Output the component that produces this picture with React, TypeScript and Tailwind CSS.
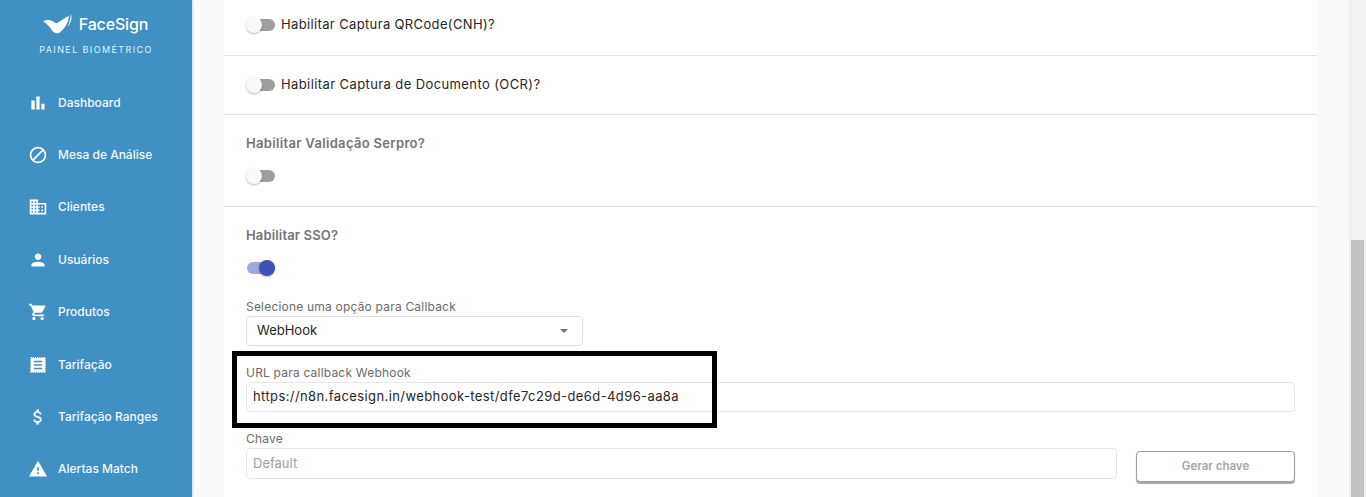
import { ReactNode } from "react";
import { MdBarChart, MdBlock, MdBusiness, MdPerson, MdShoppingCart, MdAttachMoney, MdWarning } from "react-icons/md";

// receipt glyph with the jagged edge all round, md-icons only has top/bottom teeth
function TarifaIcon({ className }: { size?: number; className?: string }) {
  return (
    <svg width="18" height="18" viewBox="0 0 18 18" className={className}>
      <rect x="2.6" y="2.6" width="12.8" height="12.8" fill="white" />
      <rect x="2.2" y="2.2" width="13.6" height="13.6" fill="none" stroke="white" strokeWidth="1" strokeDasharray="1 1" />
      <path d="M5.2 5.8h7.6M5.2 9h7.6M5.2 12.2h7.6" stroke="#4090c4" strokeWidth="1.2" />
    </svg>
  );
}

const NAV = [
  { label: "Dashboard", icon: MdBarChart },
  { label: "Mesa de Análise", icon: MdBlock },
  { label: "Clientes", icon: MdBusiness },
  { label: "Usuários", icon: MdPerson },
  { label: "Produtos", icon: MdShoppingCart },
  { label: "Tarifação", icon: TarifaIcon },
  { label: "Tarifação Ranges", icon: MdAttachMoney },
  { label: "Alertas Match", icon: MdWarning },
];

function Toggle({ on = false }: { on?: boolean }) {
  return (
    <span className="relative block h-[14px] w-[29px] shrink-0">
      <span className={`absolute inset-y-[1px] left-[1px] right-0 rounded-full ${on ? "bg-[#9fa8da]" : "bg-[#9e9e9e]"}`} />
      <span
        className={`absolute top-[-1px] size-4 rounded-full shadow-[0_1px_2px_rgba(0,0,0,0.28)] ${on ? "right-0 bg-[#3f51b5]" : "left-0 bg-[#fafafa]"}`}
      />
    </span>
  );
}

function Label({ children }: { children: ReactNode }) {
  return <div className="text-[12px] leading-[18px] text-[#6b6b6b] tracking-[0.2px]">{children}</div>;
}

export default function App() {
  return (
    <div className="relative flex h-[497px] w-[1366px] overflow-hidden bg-[#fafafa] font-['Inter',sans-serif]">
      {/* SIDEBAR */}
      <aside className="flex w-[192px] shrink-0 flex-col bg-[#4090c4] text-white shadow-[1px_0_2px_rgba(0,0,0,0.15)]">
        <div className="flex flex-col items-center pt-[12px]">
          <div className="flex h-[24px] items-center gap-[6px] pr-[1px]">
            <svg width="30" height="21" viewBox="0 0 30 21" fill="white" className="mt-[1px]">
              <path d="M0 7.5 C3 5.5 7 5.5 10 7.5 C12 9 13.5 9.5 15 8.5 C19 6 22 3.5 26 2 C25.5 8 22 14 18 17.5 C15 20.5 11.5 19.5 9 16.5 C7 13 4 9.5 0 7.5 Z" />
              <path d="M27.5 0 C29.5 3 28.5 8 24.5 13 C26.5 8 28 4.5 27.5 0 Z" />
            </svg>
            <span className="text-[16px] font-medium leading-[24px] tracking-[-0.15px]">FaceSign</span>
          </div>
          <div className="mt-[8px] text-[9px] leading-[12px] tracking-[1.4px] text-[#e3f0f8]">PAINEL BIOMÉTRICO</div>
        </div>
        <nav className="mt-[30.6px] flex flex-col gap-[20.4px] pl-[29px]">
          {NAV.map((item) => (
            <div key={item.label} className="flex h-[32px] items-center gap-[11px]">
              <item.icon size={18} className="shrink-0 scale-110" />
              <span className="text-[12px] font-medium leading-[18px] text-[#f2f8fc] tracking-[0px]">{item.label}</span>
            </div>
          ))}
        </nav>
      </aside>

      {/* CONTENT */}
      <main className="ml-[32px] h-full w-[1093px] shrink-0 bg-white text-[#262626]">
        <div className="flex h-[56px] items-center gap-[6px] border-b border-[#e2e2e2] pb-[6px] pl-[22px]">
          <Toggle />
          <span className="text-[13px] tracking-[0.36px]">Habilitar Captura QRCode(CNH)?</span>
        </div>
        <div className="flex h-[59px] items-center gap-[6px] border-b border-[#e2e2e2] pl-[22px]">
          <Toggle />
          <span className="text-[13px] tracking-[0.4px]">Habilitar Captura de Documento (OCR)?</span>
        </div>
        <div className="h-[92px] border-b border-[#e2e2e2] pl-[22px] pt-[19px]">
          <div className="text-[13px] font-semibold leading-[18px] text-[#757575] tracking-[0.33px]">Habilitar Validação Serpro?</div>
          <div className="mt-[17px]">
            <Toggle />
          </div>
        </div>
        <div className="px-[22px] pt-[19px]">
          <div className="text-[13px] font-semibold leading-[18px] text-[#757575] tracking-[0.15px]">Habilitar SSO?</div>
          <div className="mt-[17px]">
            <Toggle on />
          </div>
          <div className="mt-[23px]">
            <Label>Selecione uma opção para Callback</Label>
          </div>
          <div className="flex h-[30px] w-[337px] items-center justify-between rounded border border-[#e0e0e0] pl-[10px] pr-[13px]">
            <span className="text-[13px] text-[#262626]">WebHook</span>
            <span className="mr-[1px] border-x-[4px] border-t-[4px] border-x-transparent border-t-[#757575]" />
          </div>
          <div className="mt-[18px]">
            <Label>URL para callback Webhook</Label>
          </div>
          <div className="flex h-[30px] items-center rounded border border-[#e6e6e6] px-[6px]">
            <span className="text-[13px] text-[#262626] tracking-[0.4px]">https://n8n.facesign.in/webhook-test/dfe7c29d-de6d-4d96-aa8a</span>
          </div>
          <div className="mt-[18px]">
            <Label>Chave</Label>
          </div>
          <div className="flex items-start gap-[19px]">
            <div className="flex h-[31px] flex-1 items-center rounded border border-[#e6e6e6] px-[6px]">
              <span className="text-[13px] text-[#9e9e9e]">Default</span>
            </div>
            <button className="mt-[3px] h-[31px] w-[159px] rounded border border-[#a0a0a0] bg-white text-[11.5px] font-semibold text-[#a6a6a6] shadow-[0_1.5px_1px_rgba(0,0,0,0.35)]">
              Gerar chave
            </button>
          </div>
        </div>
      </main>

      {/* SCROLLBAR */}
      <div className="ml-auto flex h-full w-[17px] shrink-0 flex-col bg-[#f1f1f1] pl-[2px] pr-[2px] pt-[240px]">
        <div className="flex-1 bg-[#c1c1c1]" />
      </div>

      {/* annotation drawn over the screenshot */}
      <div className="pointer-events-none absolute left-[232px] top-[351px] h-[77px] w-[485px] border-[5px] border-black" />
    </div>
  );
}
